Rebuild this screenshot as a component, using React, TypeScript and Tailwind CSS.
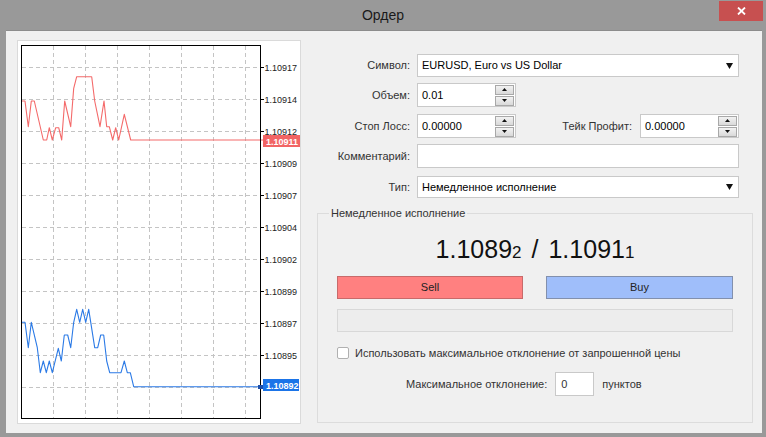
import React from "react";

const redPts: [number, number][] = [
  [22, 101], [25, 101], [28.3, 126.7], [31.3, 101], [34.3, 101], [43.3, 140], [46.7, 140],
  [49.3, 127.7], [52.3, 140], [55.7, 127.7], [58.7, 127.7], [61.7, 140], [64.7, 101],
  [70.7, 126.7], [73.7, 88.3], [76.7, 76.7], [91.7, 76.7], [94.7, 101], [100, 126.7],
  [104, 101], [106.7, 126.7], [109.3, 126.7], [112.7, 140], [115.7, 127.7], [118.7, 140],
  [124.3, 114.3], [130.7, 140], [263, 140],
];

const bluePts: [number, number][] = [
  [22, 322.3], [25, 322.3], [28.3, 347.7], [31.3, 322.3], [37.3, 347.7], [40.3, 372.7],
  [43.3, 361], [46.3, 372.7], [49.3, 361], [52.3, 372.7], [58.3, 348.3], [61.3, 361],
  [64.3, 335], [67.7, 335], [70.7, 347.7], [73.7, 322.3], [76.7, 309.3], [79.7, 322.3],
  [82.7, 309.3], [85.7, 322.3], [88.7, 309.3], [94.7, 347.7], [97.7, 347.7], [100.7, 335],
  [103.7, 335], [106.7, 361], [109.7, 372.7], [121, 372.7], [124.3, 361], [127.3, 372.7],
  [130.3, 372.7], [133.7, 386.7], [263, 386.7],
];

const levels: [number, string][] = [
  [67, "1.10917"], [99, "1.10914"], [131, "1.10912"], [163, "1.10909"], [195, "1.10907"],
  [227, "1.10904"], [259, "1.10902"], [291, "1.10899"], [323, "1.10897"], [355, "1.10895"],
  [387, ""],
];

const vlines = [53, 85, 117, 149, 181, 213, 245];

function Chart() {
  const pts = (p: [number, number][]) => p.map(([x, y]) => `${x},${y}`).join(" ");
  return (
    <svg width="284" height="384" className="block">
      <g transform="translate(-17 -40)">
        {levels.map(([y]) => (
          <line key={"h" + y} x1="22" x2="260" y1={y + 0.5} y2={y + 0.5} stroke="#c4c4c4" strokeDasharray="4 3" />
        ))}
        {vlines.map((x) => (
          <line key={"v" + x} x1={x + 0.5} x2={x + 0.5} y1="46" y2="418" stroke="#c4c4c4" strokeDasharray="4 3" />
        ))}
        {levels.map(([y, t]) => (
          <g key={"t" + y}>
            <line x1="260" x2="264" y1={y + 0.5} y2={y + 0.5} stroke="#000" />
            {t && (
              <text x="264.5" y={y + 4} fontSize="9" fill="#222" fontFamily="'Liberation Sans', Arial, sans-serif">
                {t}
              </text>
            )}
          </g>
        ))}
        <polyline points={pts(redPts)} fill="none" stroke="#f46a6a" strokeWidth="1.1" strokeLinejoin="round" />
        <polyline points={pts(bluePts)} fill="none" stroke="#2b7ae6" strokeWidth="1.1" strokeLinejoin="round" />
        <rect x="21.5" y="45.5" width="239" height="373" fill="none" stroke="#000" />
        <rect x="263" y="135" width="37" height="12" fill="#f26464" />
        <text x="266" y="144.5" fontSize="9" fill="#fff" fontWeight="bold" fontFamily="'Liberation Sans', Arial, sans-serif">
          1.10911
        </text>
        <rect x="258" y="385" width="5" height="4" fill="#1d4fa8" />
        <rect x="263" y="379" width="36" height="12" fill="#1b74e8" />
        <text x="266" y="388.5" fontSize="9" fill="#fff" fontWeight="bold" fontFamily="'Liberation Sans', Arial, sans-serif">
          1.10892
        </text>
      </g>
    </svg>
  );
}

function Arrow() {
  return (
    <svg width="7" height="6" viewBox="0 0 7 6" className="block">
      <path d="M0 0 H7 L3.5 6 Z" fill="#111" />
    </svg>
  );
}

function SpinBtn({ up }: { up?: boolean }) {
  return (
    <div className="flex h-[10px] w-[19px] items-center justify-center border border-[#a8a8a8] bg-gradient-to-b from-[#f2f2f2] to-[#d9d9d9]">
      <svg width="5" height="3" viewBox="0 0 5 3" className="block">
        <path d={up ? "M0 3 L2.5 0 L5 3 Z" : "M0 0 L5 0 L2.5 3 Z"} fill="#111" />
      </svg>
    </div>
  );
}

function SpinInput({ value }: { value: string }) {
  return (
    <div className="flex h-[24px] w-[99px] items-center border border-[#c9c9c9] bg-white">
      <span className="flex-1 pl-[4px] text-[11px] text-black">{value}</span>
      <div className="mr-[1px] flex flex-col gap-[1px]">
        <SpinBtn up />
        <SpinBtn />
      </div>
    </div>
  );
}

function Label({ children }: { children: React.ReactNode }) {
  return <div className="w-[100px] shrink-0 text-right text-[11px] text-[#333]">{children}</div>;
}

export default function App() {
  return (
    <div className="flex h-[437px] w-[766px] flex-col overflow-hidden bg-[#999999] font-['Liberation_Sans',Arial,sans-serif]">
      <div className="relative flex h-[30px] shrink-0 items-center justify-center">
        <span className="text-[14px] text-[#1a1a1a]">Ордер</span>
        <div className="absolute right-[3px] top-[1px] flex h-[20px] w-[44px] items-center justify-center bg-[#c75050]">
          <svg width="9" height="8" viewBox="0 0 9 8">
            <path d="M1 0.5 L8 7.5 M8 0.5 L1 7.5" stroke="#fff" strokeWidth="1.8" />
          </svg>
        </div>
      </div>
      <div className="ml-[6px] flex h-[403px] w-[756px] items-start border-t border-[#8c8c8c] bg-[#f0f0f0]">
        <div className="ml-[11px] mt-[9px] h-[384px] w-[284px] shrink-0 border border-[#dadada] bg-white">
          <div className="-m-px">
            <Chart />
          </div>
        </div>
        <div className="ml-[9px] mt-[23px] flex w-[443px] flex-col">
          <div className="flex h-[23px] items-center">
            <Label>Символ:</Label>
            <div className="ml-[7px] flex h-full w-[322px] items-center border border-[#c9c9c9] bg-white pl-[4px] pr-[5px]">
              <span className="flex-1 text-[11px] text-black">EURUSD, Euro vs US Dollar</span>
              <Arrow />
            </div>
          </div>
          <div className="mt-[6px] flex h-[24px] items-center">
            <Label>Объем:</Label>
            <div className="ml-[7px]">
              <SpinInput value="0.01" />
            </div>
          </div>
          <div className="mt-[7px] flex h-[24px] items-center">
            <Label>Стоп Лосс:</Label>
            <div className="ml-[7px]">
              <SpinInput value="0.00000" />
            </div>
            <div className="flex-1" />
            <span className="text-[11px] text-[#333]">Тейк Профит:</span>
            <div className="ml-[8px] mr-[14px]">
              <SpinInput value="0.00000" />
            </div>
          </div>
          <div className="mt-[6px] flex h-[24px] items-center">
            <Label>Комментарий:</Label>
            <div className="ml-[7px] h-full w-[322px] border border-[#c9c9c9] bg-white" />
          </div>
          <div className="mt-[8px] flex h-[22px] items-center">
            <Label>Тип:</Label>
            <div className="ml-[7px] flex h-full w-[322px] items-center border border-[#c9c9c9] bg-white pl-[4px] pr-[5px]">
              <span className="flex-1 text-[11px] text-black">Немедленное исполнение</span>
              <Arrow />
            </div>
          </div>
          <fieldset className="ml-[7px] mt-[8px] w-[436px] border border-[#dcdcdc] px-[19px] pb-[26px]">
            <legend className="-ml-[8px] px-[2px] text-[11px] leading-[14px] text-[#333]">
              Немедленное исполнение
            </legend>
            <div className="mt-[11px] flex h-[30px] items-baseline justify-center text-[#111]">
              <span className="text-[25px]">1.1089</span>
              <span className="text-[17px]">2</span>
              <span className="mx-[10px] text-[25px]">/</span>
              <span className="text-[25px]">1.1091</span>
              <span className="text-[17px]">1</span>
            </div>
            <div className="mt-[15px] flex h-[23px] gap-[23px]">
              <div className="flex w-[186px] items-center justify-center border border-[#c86a6a] bg-[#ff8080] text-[11px] text-[#222]">
                Sell
              </div>
              <div className="flex w-[187px] items-center justify-center border border-[#8290ad] bg-[#9fbefa] text-[11px] text-[#222]">
                Buy
              </div>
            </div>
            <div className="mt-[10px] h-[23px] border border-[#d8d8d8] bg-[#ededed]" />
            <div className="mt-[15px] flex h-[12px] items-center">
              <div className="h-[12px] w-[12px] rounded-[2px] border border-[#b0b0b0] bg-white" />
              <span className="ml-[6px] text-[11px] text-[#333]">
                Использовать максимальное отклонение от запрошенной цены
              </span>
            </div>
            <div className="mt-[13px] flex h-[24px] items-center pl-[69px]">
              <span className="text-[11px] text-[#333]">Максимальное отклонение:</span>
              <div className="ml-[8px] flex h-full w-[39px] items-center border border-[#c9c9c9] bg-white pl-[5px] text-[11px] text-[#333]">
                0
              </div>
              <span className="ml-[8px] text-[11px] text-[#333]">пунктов</span>
            </div>
          </fieldset>
        </div>
      </div>
    </div>
  );
}
